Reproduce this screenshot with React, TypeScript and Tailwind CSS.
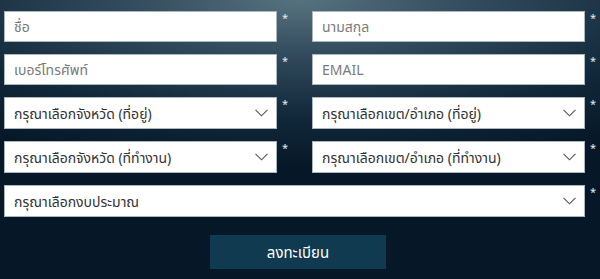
import React from "react";

const Chevron = () => (
  <svg width="13" height="8" viewBox="0 0 13 8" fill="none" className="shrink-0">
    <path d="M0.5 0.8 L6.5 6.8 L12.5 0.8" stroke="#555" strokeWidth="1.1" />
  </svg>
);

const Star = ({ w }: { w: string }) => (
  <div className={`${w} shrink-0 pl-[5px] pt-[1px] text-[11px] leading-[12px] text-[#e6ecf0]`}>*</div>
);

const Field = ({ text, placeholder, select }: { text: string; placeholder?: boolean; select?: boolean }) => (
  <div
    className={`flex w-[273px] shrink-0 items-center justify-between border border-[#aab6c0] bg-white pl-[9px] pr-[8px] ${
      select ? "h-[32px]" : "h-[31px]"
    }`}
  >
    <span className={`text-[14px] ${placeholder ? "text-[#7a7a7a]" : "text-[#333]"}`}>{text}</span>
    {select && <Chevron />}
  </div>
);

export default function App() {
  return (
    <div
      className="h-[279px] w-[600px] overflow-hidden bg-[radial-gradient(ellipse_90%_60%_at_50%_0%,#57727f_0%,#2f485a_35%,#11283a_70%,#061828_100%)] px-[4px] pt-[11px]"
      style={{ fontFamily: '"Noto Sans", "Noto Sans Thai", sans-serif' }}
    >
      <div className="flex">
        <Field text="ชื่อ" placeholder />
        <Star w="w-[35px]" />
        <Field text="นามสกุล" placeholder />
        <Star w="w-[15px]" />
      </div>
      <div className="mt-[12px] flex">
        <Field text="เบอร์โทรศัพท์" placeholder />
        <Star w="w-[35px]" />
        <Field text="EMAIL" placeholder />
        <Star w="w-[15px]" />
      </div>
      <div className="mt-[12px] flex">
        <Field text="กรุณาเลือกจังหวัด (ที่อยู่)" select />
        <Star w="w-[35px]" />
        <Field text="กรุณาเลือกเขต/อำเภอ (ที่อยู่)" select />
        <Star w="w-[15px]" />
      </div>
      <div className="mt-[12px] flex">
        <Field text="กรุณาเลือกจังหวัด (ที่ทำงาน)" select />
        <Star w="w-[35px]" />
        <Field text="กรุณาเลือกเขต/อำเภอ (ที่ทำงาน)" select />
        <Star w="w-[15px]" />
      </div>
      <div className="mt-[12px] flex">
        <div className="flex h-[32px] w-[581px] shrink-0 items-center justify-between border border-[#aab6c0] bg-white pl-[9px] pr-[8px]">
          <span className="text-[14px] text-[#333]">กรุณาเลือกงบประมาณ</span>
          <Chevron />
        </div>
        <Star w="w-[15px]" />
      </div>
      <div className="mt-[18px] flex justify-center pr-[4px]">
        <button className="h-[34px] w-[176px] bg-[#0f3a4f] text-[15px] text-white">ลงทะเบียน</button>
      </div>
    </div>
  );
}
